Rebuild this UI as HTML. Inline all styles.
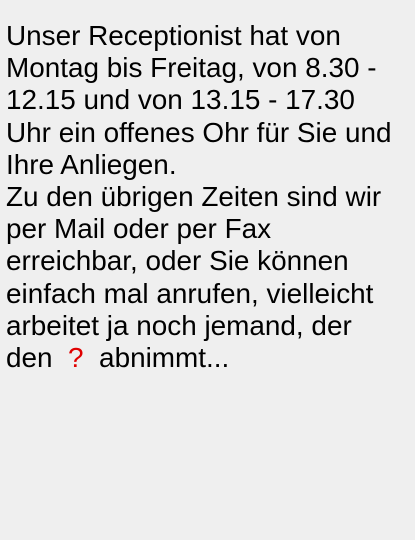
<!DOCTYPE html><html><head><style>
html,body{margin:0;background:#efefef;}
body{width:415px;height:540px;overflow:hidden;}
p{margin:0;position:absolute;left:6px;top:20px;width:410px;font-family:"Liberation Sans",sans-serif;font-size:27.9px;line-height:32.2px;color:#000;}
.q{color:#e00000;}
</style></head><body>
<p>Unser Receptionist hat von<br>Montag bis Freitag, von 8.30 -<br>12.15 und von 13.15 - 17.30<br>Uhr ein offenes Ohr für Sie und<br>Ihre Anliegen.<br>Zu den übrigen Zeiten sind wir<br>per Mail oder per Fax<br>erreichbar, oder Sie können<br>einfach mal anrufen, vielleicht<br>arbeitet ja noch jemand, der<br>den &nbsp;<span class="q">?</span>&nbsp; abnimmt...</p>
</body></html>
